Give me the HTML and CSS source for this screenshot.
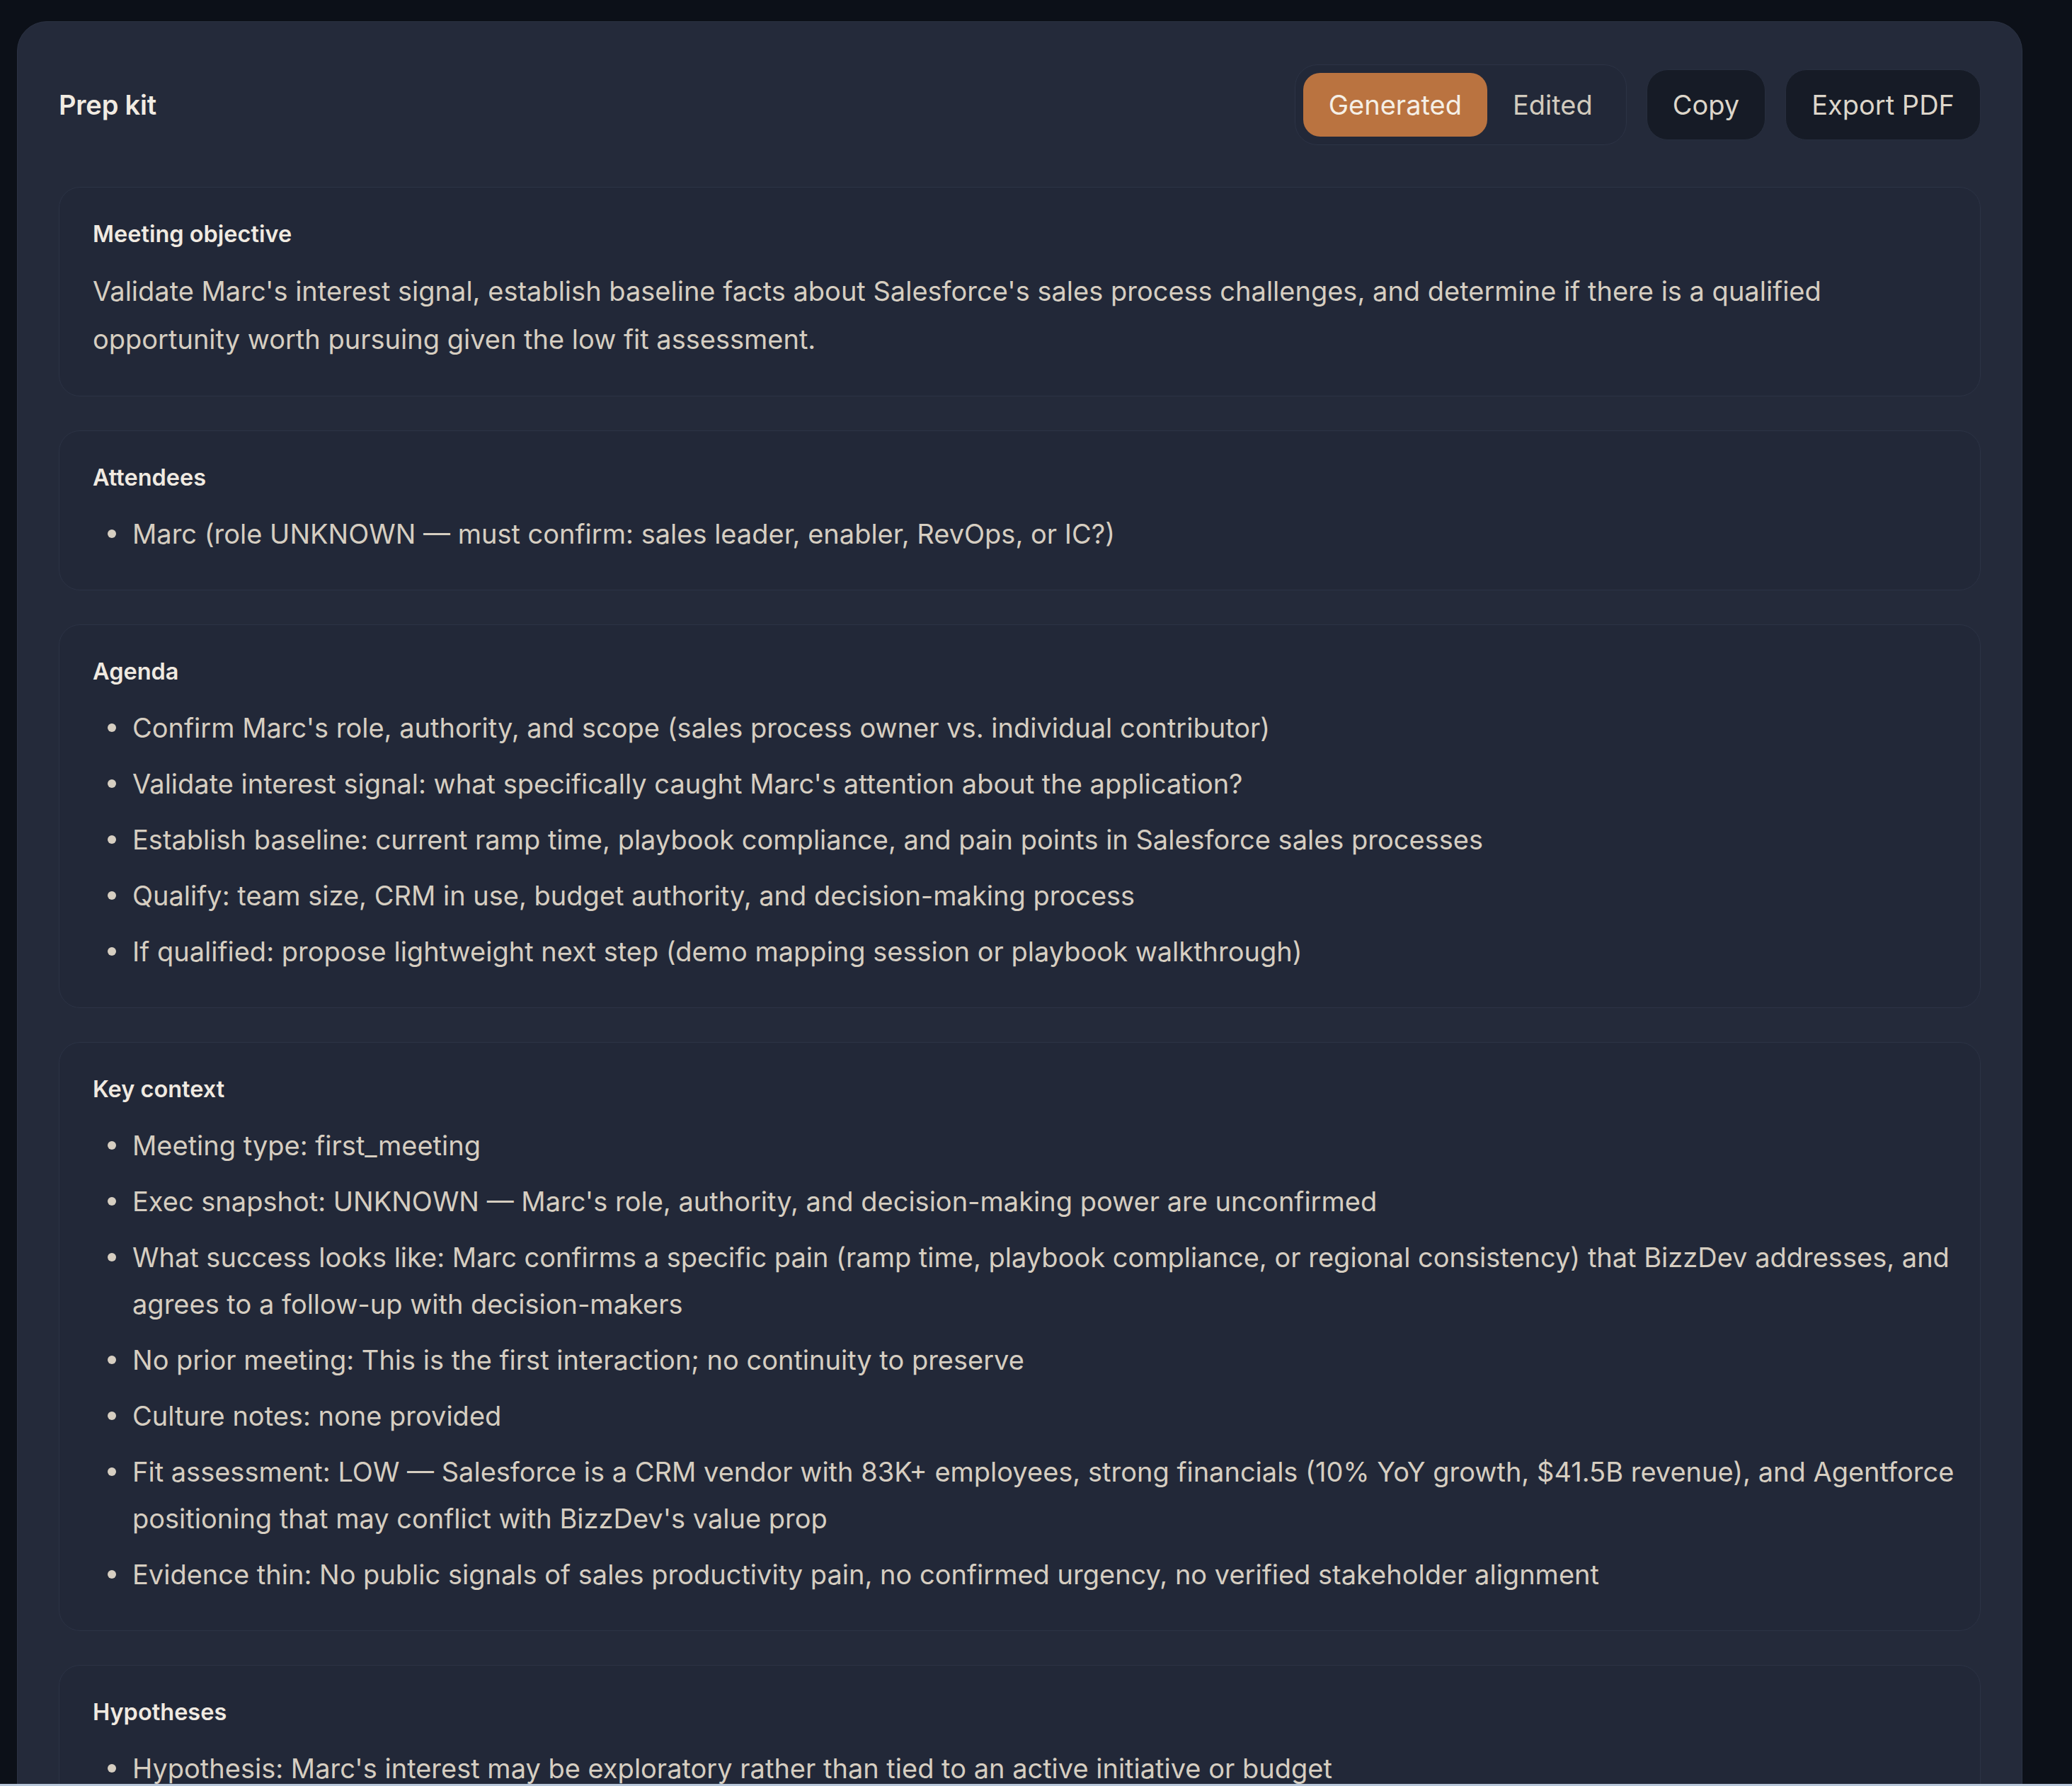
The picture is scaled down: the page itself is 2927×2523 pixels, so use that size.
FILE: index.html
```html
<!DOCTYPE html>
<html lang="en">
<head>
<meta charset="utf-8">
<title>Prep kit</title>
<link rel="stylesheet" href="styles.css">
</head>
<body>
<main class="page">
  <section class="panel">
    <header class="panel-head">
      <h1 class="title">Prep kit</h1>
      <div class="actions">
        <div class="toggle">
          <button class="toggle-btn is-active">Generated</button>
          <button class="toggle-btn">Edited</button>
        </div>
        <button class="btn">Copy</button>
        <button class="btn">Export PDF</button>
      </div>
    </header>

    <div class="cards">
      <article class="card">
        <h2 class="card-title">Meeting objective</h2>
        <p class="card-text">Validate Marc's interest signal, establish baseline facts about Salesforce's sales process challenges, and determine if there is a qualified opportunity worth pursuing given the low fit assessment.</p>
      </article>

      <article class="card">
        <h2 class="card-title">Attendees</h2>
        <ul class="list">
          <li>Marc (role UNKNOWN — must confirm: sales leader, enabler, RevOps, or IC?)</li>
        </ul>
      </article>

      <article class="card">
        <h2 class="card-title">Agenda</h2>
        <ul class="list">
          <li>Confirm Marc's role, authority, and scope (sales process owner vs. individual contributor)</li>
          <li>Validate interest signal: what specifically caught Marc's attention about the application?</li>
          <li>Establish baseline: current ramp time, playbook compliance, and pain points in Salesforce sales processes</li>
          <li>Qualify: team size, CRM in use, budget authority, and decision-making process</li>
          <li>If qualified: propose lightweight next step (demo mapping session or playbook walkthrough)</li>
        </ul>
      </article>

      <article class="card">
        <h2 class="card-title">Key context</h2>
        <ul class="list">
          <li>Meeting type: first_meeting</li>
          <li>Exec snapshot: UNKNOWN — Marc's role, authority, and decision-making power are unconfirmed</li>
          <li>What success looks like: Marc confirms a specific pain (ramp time, playbook compliance, or regional consistency) that BizzDev addresses, and agrees to a follow-up with decision-makers</li>
          <li>No prior meeting: This is the first interaction; no continuity to preserve</li>
          <li>Culture notes: none provided</li>
          <li>Fit assessment: LOW — Salesforce is a CRM vendor with 83K+ employees, strong financials (10% YoY growth, $41.5B revenue), and Agentforce positioning that may conflict with BizzDev's value prop</li>
          <li>Evidence thin: No public signals of sales productivity pain, no confirmed urgency, no verified stakeholder alignment</li>
        </ul>
      </article>

      <article class="card">
        <h2 class="card-title">Hypotheses</h2>
        <ul class="list">
          <li>Hypothesis: Marc's interest may be exploratory rather than tied to an active initiative or budget</li>
        </ul>
      </article>
    </div>
  </section>
</main>
<div class="edge"></div>
</body>
</html>
```
FILE: styles.css
```css
* { box-sizing: border-box; }

html, body {
  margin: 0;
  background: #0c1018;
}

body {
  font-family: "Inter", "Noto Sans", sans-serif;
  color: #d6cec1;
  overflow: hidden;
  height: 2523px;
}

.page {
  padding: 30px 0 0 24px;
}

.panel {
  width: 2833px;
  background: #242a3a;
  border: 1px solid #2b3243;
  border-radius: 42px;
  padding: 60px 58px 80px;
}

.panel-head {
  display: flex;
  align-items: center;
  justify-content: space-between;
  height: 114px;
  margin-bottom: 59px;
}

.title {
  margin: 0;
  font-size: 38px;
  font-weight: 600;
  color: #f1ebe2;
  letter-spacing: -0.2px;
}

.actions {
  display: flex;
  align-items: center;
  gap: 28px;
}

.toggle {
  display: flex;
  padding: 11px;
  border: 1px solid #2c3345;
  border-radius: 32px;
  background: #222838;
}

.toggle-btn,
.btn {
  font-family: inherit;
  font-size: 38px;
  font-weight: 400;
  border: 0;
  background: none;
  cursor: pointer;
}

.toggle-btn {
  height: 90px;
  padding: 0 36px;
  border-radius: 24px;
  color: #d2cbbe;
}

.toggle-btn.is-active {
  background: #ba7340;
  color: #f5efe6;
}

.btn {
  height: 100px;
  padding: 0 36px;
  border-radius: 30px;
  background: #161b26;
  border: 1px solid #272e3e;
  color: #ddd6ca;
}

.cards {
  display: flex;
  flex-direction: column;
  gap: 48px;
}

.card {
  background: #222838;
  border: 1px solid #2c3345;
  border-radius: 30px;
  padding: 46px 30px 46px 47px;
}

.card-title {
  margin: 0 0 26px;
  font-size: 32.5px;
  line-height: 40px;
  font-weight: 600;
  color: #f0eae1;
}

.card-text {
  margin: 0;
  font-size: 38px;
  line-height: 68px;
  color: #d6cec1;
}

.list {
  list-style: none;
  margin: 0;
  padding: 0;
}

.list li {
  position: relative;
  padding-left: 56px;
  font-size: 38px;
  line-height: 66px;
}

.list li + li {
  margin-top: 13px;
}

.list li::before {
  content: "";
  position: absolute;
  left: 21px;
  top: 27px;
  width: 12px;
  height: 12px;
  border-radius: 50%;
  background: #d6cec1;
}

.edge {
  position: fixed;
  left: 0;
  right: 0;
  bottom: 0;
  height: 3px;
  background: #b8c7da;
}
```
